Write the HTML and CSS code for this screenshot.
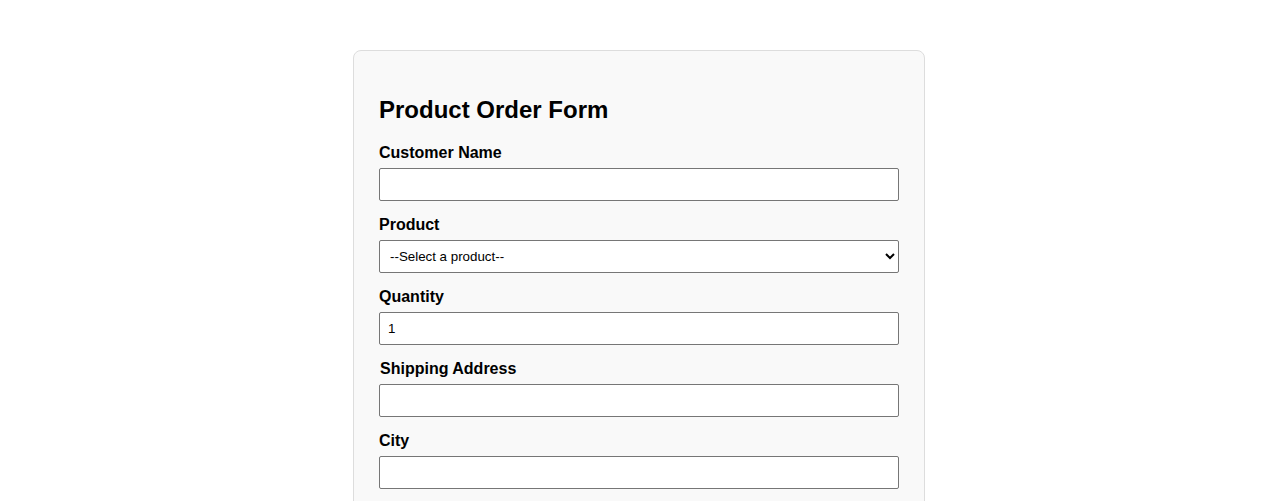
FILE: index.html
```html
<!DOCTYPE html>
<html lang="en">
<head>
  <meta charset="UTF-8">
  <meta name="viewport" content="width=device-width, initial-scale=1.0">
  <title>Product Order Form</title>
  <link rel="stylesheet" href="styles.css">
</head>
<body>
  <div class="form-container">
    <h2>Product Order Form</h2>
    <form id="orderForm">
      <div class="form-group">
        <label for="customerName">Customer Name</label>
        <input type="text" id="customerName" name="customerName">
      </div>
      <div class="form-group">
        <label for="product">Product</label>
        <select id="product" name="product">
          <option value="">--Select a product--</option>
          <option value="laptop">Laptop</option>
          <option value="phone">Phone</option>
          <option value="tablet">Tablet</option>
        </select>
      </div>
      <div class="form-group">
        <label for="quantity">Quantity</label>
        <input type="number" id="quantity" name="quantity" value="1" min="1">
      </div>
      <div class="form-group">
        <label for="address" class="shift">Shipping Address</label>
        <input type="text" id="address" name="address">
      </div>
      <div class="form-group">
        <label for="city">City</label>
        <input type="text" id="city" name="city">
      </div>
      <div class="form-group">
        <label for="zip">Postal Code</label>
        <input type="text" id="zip" name="zip">
      </div>
    </form>
  </div>
</body>
</html>
```

FILE: styles.css
```css
body {
  font-family: "Liberation Sans", Arial, sans-serif;
  color: #000;
  background-color: #fff;
  margin: 0;
}

.form-container {
  width: 520px;
  margin: 50px auto;
  padding: 25px;
  background-color: #f9f9f9;
  border: 1px solid #ddd;
  border-radius: 8px;
}

h2 {
  font-size: 24px;
  margin: 20px 0 20px;
}

.form-group {
  margin-bottom: 15px;
}

label {
  display: block;
  font-weight: bold;
  font-size: 16px;
  line-height: 18px;
  margin-bottom: 6px;
}

label.shift {
  padding-left: 1px;
}

input,
select {
  display: block;
  width: 100%;
  box-sizing: border-box;
  height: 33px;
  padding: 8px;
  font-family: "Liberation Sans", Arial, sans-serif;
  font-size: 13.33px;
  border: 1px solid #767676;
  border-radius: 2px;
  background-color: #fff;
  color: #000;
}

select {
  padding: 0 6px;
}
```
